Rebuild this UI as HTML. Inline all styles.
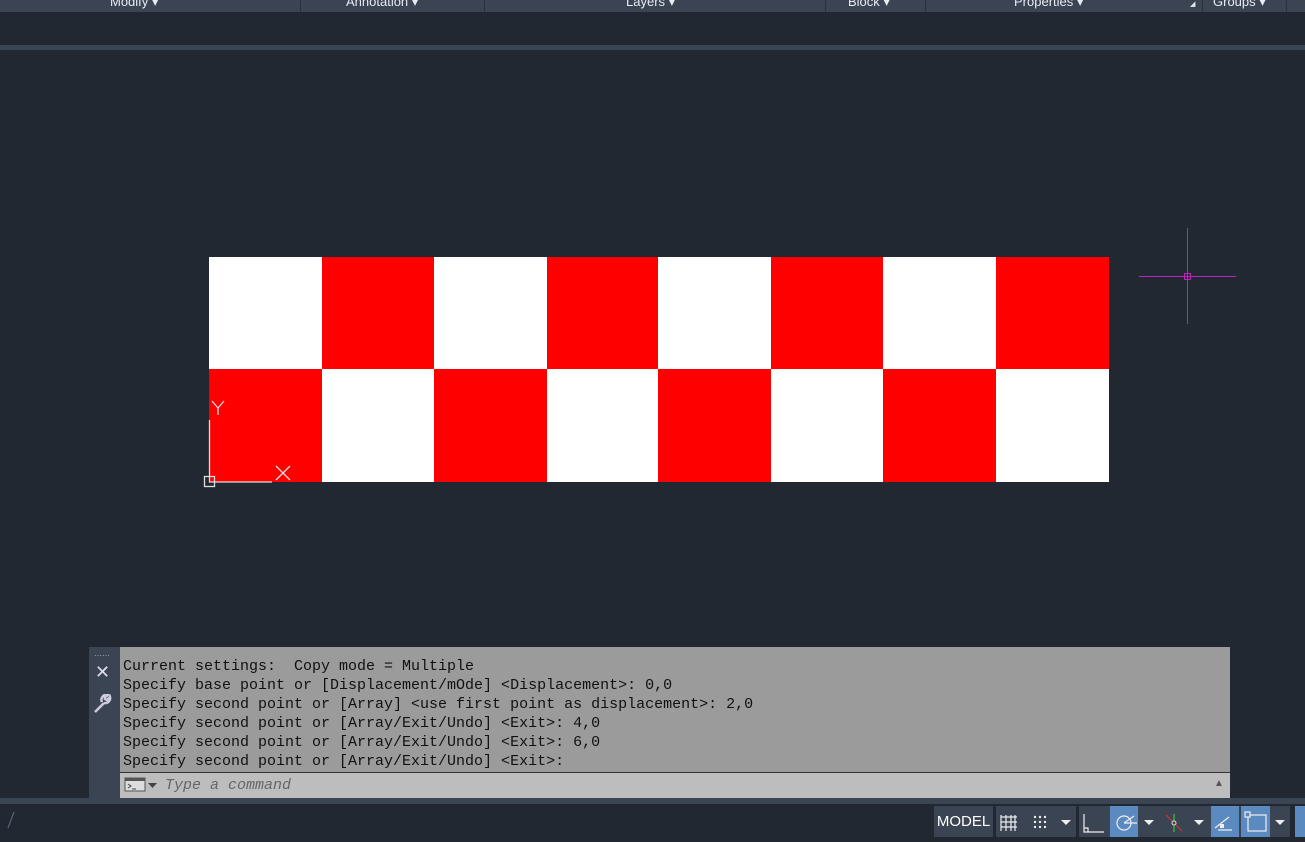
<!DOCTYPE html>
<html><head><meta charset="utf-8"><style>
*{margin:0;padding:0;box-sizing:border-box}
body{width:1305px;height:842px;background:#222831;position:relative;overflow:hidden;font-family:"Liberation Sans",sans-serif}
.a{position:absolute}
.tb{left:0;top:0;width:1305px;height:12px;background:#3b4453}
.tb span{position:absolute;top:-6px;color:#e8ecf2;font-size:13px}
.sep{position:absolute;top:0;width:1px;height:12px;background:#2a313c}
.mono{font-family:"Liberation Mono",monospace;font-size:15px;color:#111;line-height:19px;white-space:pre}
.sb{position:absolute;top:806px;height:31px;background:#3b4453}
.on{background:#5b8ac0}
</style></head><body>
<div class="a tb">
<span style="left:110px">Modify ▾</span><div class="sep" style="left:300px"></div>
<span style="left:346px">Annotation ▾</span><div class="sep" style="left:484px"></div>
<span style="left:626px">Layers ▾</span><div class="sep" style="left:825px"></div>
<span style="left:848px">Block ▾</span><div class="sep" style="left:925px"></div>
<span style="left:1014px">Properties ▾</span><span style="left:1190px;font-size:7px;top:0">◢</span><div class="sep" style="left:1202px"></div>
<span style="left:1213px">Groups ▾</span><div class="sep" style="left:1286px"></div>
</div>
<div class="a" style="left:0;top:45px;width:1305px;height:5px;background:#3b4453"></div>

<svg class="a" style="left:0;top:0" width="1305" height="842">
<g fill="#fff"><rect x="209" y="257" width="900" height="225"/></g>
<g fill="#f00">
<rect x="322" y="257" width="112" height="112"/><rect x="547" y="257" width="111" height="112"/><rect x="771" y="257" width="112" height="112"/><rect x="996" y="257" width="113" height="112"/>
<rect x="209" y="369" width="113" height="113"/><rect x="434" y="369" width="113" height="113"/><rect x="658" y="369" width="113" height="113"/><rect x="883" y="369" width="113" height="113"/>
</g>
<g stroke="#ddd" stroke-width="1.3" fill="none">
<path d="M209.5 420V482H272"/><rect x="204.5" y="476.5" width="10" height="10"/>
<path d="M276 466L290 480M290 466L276 480"/>
<path d="M212 401L218 408L224 401M218 408V415"/>
</g>
<g stroke="#c020c0" stroke-width="1" fill="none">
<path d="M1139 276.5H1236M1187.5 228V324"/><rect x="1184.5" y="273.5" width="6" height="6"/>
</g>
<path d="M14 812L8 828" stroke="#556070" stroke-width="1.3"/>
</svg>

<div class="a" style="left:89px;top:647px;width:31px;height:151px;background:#3b4453"></div>
<div class="a" style="left:94px;top:651px;color:#aab;font-size:8px;letter-spacing:0">⋯⋯</div>
<div class="a" style="left:95px;top:662px;color:#dde;font-size:18px">✕</div>
<svg class="a" style="left:93px;top:694px" width="20" height="20"><path d="M2 18L11 9M11 9A5 5 0 0 0 17 3L14 6L12 5L12 3L15 1A5 5 0 0 0 9 8" stroke="#ccd" stroke-width="2.5" fill="none"/></svg>
<div class="a" style="left:120px;top:647px;width:1110px;height:125px;background:#9b9b9b"></div>
<div class="a mono" style="left:123px;top:657px">Current settings:  Copy mode = Multiple
Specify base point or [Displacement/mOde] &lt;Displacement&gt;: 0,0
Specify second point or [Array] &lt;use first point as displacement&gt;: 2,0
Specify second point or [Array/Exit/Undo] &lt;Exit&gt;: 4,0
Specify second point or [Array/Exit/Undo] &lt;Exit&gt;: 6,0
Specify second point or [Array/Exit/Undo] &lt;Exit&gt;:</div>
<div class="a" style="left:120px;top:772px;width:1110px;height:1px;background:#333"></div>
<div class="a" style="left:120px;top:773px;width:1110px;height:25px;background:#bdbdbd"></div>
<svg class="a" style="left:124px;top:777px" width="36" height="16"><rect x="1" y="1" width="20" height="13" fill="#ddd" stroke="#555"/><rect x="1" y="1" width="20" height="3" fill="#555"/><path d="M4 7L7 9L4 11M8 12H12" stroke="#444" fill="none"/><path d="M24 6H33L28.5 11Z" fill="#444"/></svg>
<div class="a mono" style="left:165px;top:776px;color:#666;font-style:italic">Type a command</div>
<div class="a" style="left:1214px;top:778px;color:#555;font-size:10px">▲</div>
<div class="a" style="left:0;top:798px;width:1305px;height:6px;background:#3b4453"></div>

<div class="sb" style="left:934px;width:59px;color:#fff;font-size:15px;line-height:31px;text-align:center">MODEL</div>
<div class="sb" style="left:996px;width:80px"></div>
<div class="sb" style="left:1079px;width:130px"></div>
<div class="sb on" style="left:1110px;width:28px"></div>
<div class="sb" style="left:1209px;width:81px"></div>
<div class="sb on" style="left:1211px;width:28px"></div>
<div class="sb on" style="left:1241px;width:29px"></div>
<div class="sb on" style="left:1295px;width:10px"></div>
<svg class="a" style="left:934px;top:806px" width="371" height="31">
<g stroke="#eee" stroke-width="1.2" fill="none">
<path d="M67 9V25M72 9V25M77 9V25M67 11H83M67 16H83M67 21H83M81 9V25"/>
<path d="M150 8V26H170M150 22H154V26"/>
<circle cx="190" cy="17" r="7"/><path d="M190 17L200 10M190 17H203"/>
<path d="M281 22L295 11M284 24H298"/><rect x="314" y="9" width="18" height="16"/><rect x="311" y="6" width="5" height="5" fill="#5b8ac0"/>
</g>
<g fill="#eee"><circle cx="101" cy="11" r="1.2"/><circle cx="106" cy="11" r="1.2"/><circle cx="111" cy="11" r="1.2"/><circle cx="101" cy="16" r="1.2"/><circle cx="106" cy="16" r="1.2"/><circle cx="111" cy="16" r="1.2"/><circle cx="101" cy="21" r="1.2"/><circle cx="106" cy="21" r="1.2"/><circle cx="111" cy="21" r="1.2"/>
<path d="M127 14H137L132 19Z"/><path d="M210 14H220L215 19Z"/><path d="M260 14H270L265 19Z"/><path d="M341 14H351L346 19Z"/><rect x="286" y="18" width="4" height="4"/></g>
<path d="M240 8V26" stroke="#3c3" stroke-width="1.2"/><path d="M232 9L248 25" stroke="#c33" stroke-width="1.2"/><circle cx="240" cy="17" r="2" fill="#3b4453" stroke="#ddd"/>
</svg>
</body></html>
